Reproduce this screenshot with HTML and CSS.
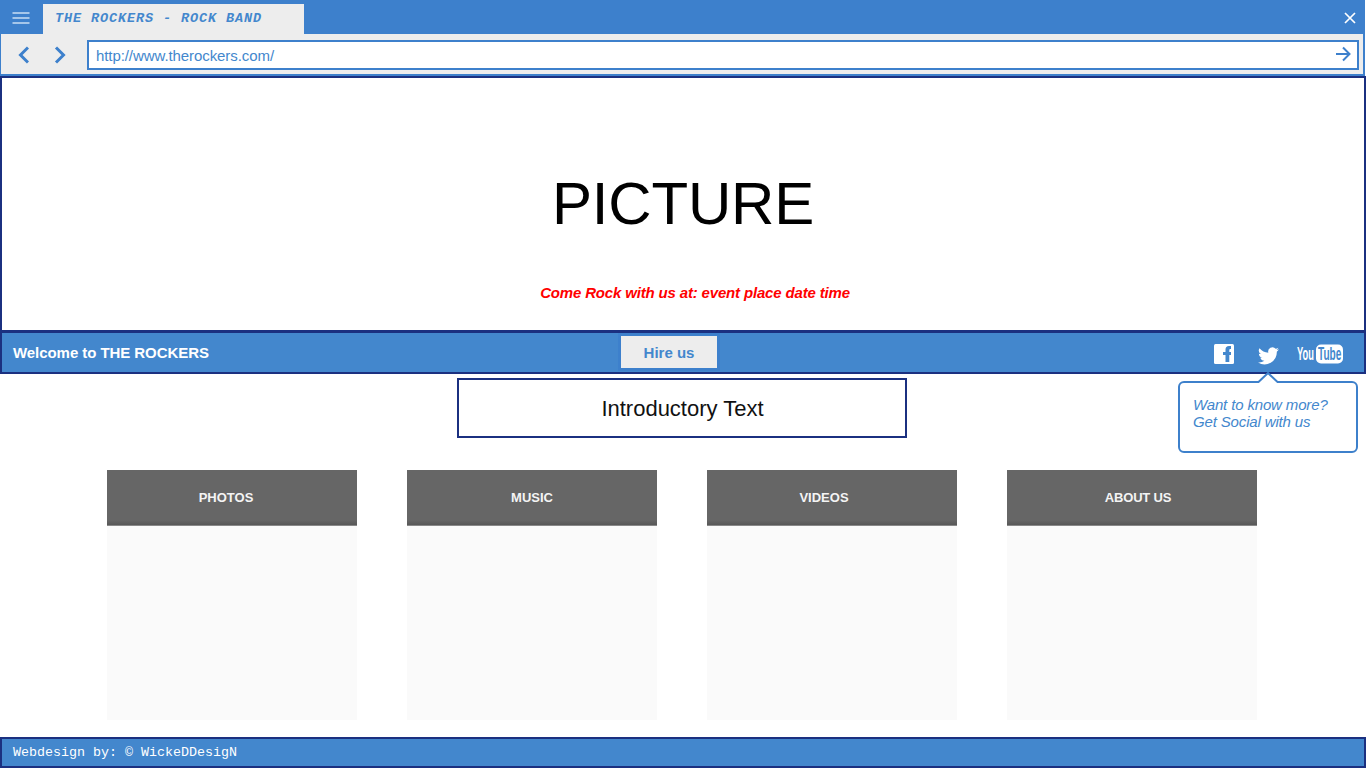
FILE: index.html
```html
<!DOCTYPE html>
<html lang="en">
<head>
<meta charset="utf-8">
<title>The Rockers - Rock Band</title>
<link rel="stylesheet" href="styles.css">
</head>
<body>
<header class="browser">
  <div class="tabs">
    <svg class="menu" width="18" height="14" viewBox="0 0 18 14"><path d="M0.5 2H17.5M0.5 7H17.5M0.5 12H17.5"/></svg>
    <div class="tab">THE ROCKERS - ROCK BAND</div>
    <svg class="close" width="12" height="12" viewBox="0 0 12 12"><path d="M1 1L11 11M11 1L1 11"/></svg>
  </div>
  <div class="toolbar">
    <svg class="nav" width="12" height="18" viewBox="0 0 12 18"><path d="M11 1.5L3.5 9L11 16.5"/></svg>
    <svg class="nav" width="12" height="18" viewBox="0 0 12 18"><path d="M2 1.5L9.5 9L2 16.5"/></svg>
    <div class="address">
      <span>http://www.therockers.com/</span>
      <svg class="go" width="16" height="16" viewBox="0 0 16 16"><path d="M1 8H14.5M8 1.5L14.5 8L8 14.5"/></svg>
    </div>
  </div>
</header>
<section class="hero">
  <h1>PICTURE</h1>
  <p>Come Rock with us at: event place date time</p>
</section>
<nav class="bar">
  <div class="welcome">Welcome to THE ROCKERS</div>
  <div class="hire">Hire us</div>
  <div class="social">
    <svg class="facebook" width="20" height="20" viewBox="0 0 20 20"><rect width="20" height="20" rx="1.5" fill="#fff"/><path fill="#4387cd" d="M9 8H11.500V5.500Q11.500 2 15 2H17V5H16.300Q15.300 5 15.300 6V8H17V11H15.300V18H11.500V11H9Z"/></svg>
    <svg class="twitter" width="21" height="18" viewBox="0 0 24 20"><path fill="#fff" d="M24 2.400a10 10 0 0 1-2.800.8A5 5 0 0 0 23.300.500a10 10 0 0 1-3.100 1.200A4.900 4.900 0 0 0 11.800 6.200 14 14 0 0 1 1.700 1.100a4.900 4.900 0 0 0 1.500 6.500A4.900 4.900 0 0 1 1 7v.1a4.900 4.900 0 0 0 3.900 4.800 5 5 0 0 1-2.200.1 4.900 4.900 0 0 0 4.600 3.400A9.900 9.900 0 0 1 0 17.400a14 14 0 0 0 21.500-12.400A10 10 0 0 0 24 2.400Z"/></svg>
    <svg class="youtube" width="48" height="22" viewBox="0 0 48 22">
      <rect x="19" y="1.500" width="27" height="19" rx="5" fill="#fff"/>
      <text transform="translate(0 17) scale(.49 1)" fill="#fff">You</text>
      <text transform="translate(21 17) scale(.53 1)" fill="#4387cd">Tube</text>
    </svg>
    <div class="bubble">
      <svg class="pointer" width="22" height="12" viewBox="0 0 22 12"><path d="M0 12L1 10L11 1L21 10L22 12Z" fill="#fff"/><path d="M0 10H1.500L11 1L20.500 10H22" fill="none" stroke="#3d80cb" stroke-width="2"/></svg>
      Want to know more?<br>Get Social with us
    </div>
  </div>
</nav>
<main class="content">
  <div class="intro">Introductory Text</div>
  <div class="cards">
    <section class="card"><h2>PHOTOS</h2></section>
    <section class="card"><h2>MUSIC</h2></section>
    <section class="card videos"><h2>VIDEOS</h2></section>
    <section class="card about"><h2>ABOUT US</h2></section>
  </div>
</main>
<footer class="footer">Webdesign by: © WickeDDesigN</footer>
</body>
</html>
```
FILE: styles.css
```css
* { box-sizing: border-box; }
body { margin: 0; width: 1366px; height: 768px; overflow: hidden; display: flex; flex-direction: column; background: #fff; font-family: "Liberation Sans", Arial, sans-serif; }
svg { display: block; flex: none; }
h1, h2, p { margin: 0; }

.browser { width: 1365px; height: 76px; flex: none; background: #ededed; border: solid #3d80cc; border-width: 0 2px 2px 1px; }
.tabs { height: 34px; margin: 0 -2px 0 -1px; padding: 4px 9px 0 12px; display: flex; background: #3d80cc; }
.menu { margin-top: 7px; fill: none; stroke: #a5c6ea; stroke-width: 2; }
.tab { width: 261px; height: 30px; margin-left: 13px; padding-left: 12px; background: #ededed; color: #4387cd; font: italic bold 13.500px/30px "Liberation Mono", "Courier New", monospace; letter-spacing: 0.9px; white-space: nowrap; }
.close { margin: 8px 0 0 auto; fill: none; stroke: #fff; stroke-width: 1.7; }
.toolbar { height: 40px; display: flex; align-items: center; padding: 2px 4px 0 16px; }
.nav { margin-right: 25px; fill: none; stroke: #3d80cc; stroke-width: 3; }
.nav + .nav { margin-right: 20px; }
.address { flex: 1; height: 30px; margin-left: 1px; padding: 0 6px 0 7px; display: flex; align-items: center; justify-content: space-between; background: #fff; border: 2px solid #3d80cc; color: #4387cd; font-size: 15px; letter-spacing: -0.08px; }
.go { margin-top: -2px; fill: none; stroke: #3d80cc; stroke-width: 2; }

.hero { height: 256px; flex: none; border: 2px solid #1b3080; text-align: center; }
.hero h1 { margin-top: 92px; font-size: 60px; font-weight: 400; line-height: 68px; letter-spacing: -0.2px; color: #000; }
.hero p { margin: 46px 0 0 24px; font-size: 15px; font-style: italic; font-weight: 700; line-height: 17px; letter-spacing: -0.165px; color: #f00; }

.bar { height: 43px; margin-top: -1px; flex: none; display: flex; align-items: center; background: #4387cd; border: 2px solid #1b3080; }
.welcome { width: 616px; padding-left: 11px; color: #fff; font-size: 15px; font-weight: 700; letter-spacing: -0.06px; }
.hire { width: 102px; height: 38px; margin-top: -2px; border: 3px solid #3d80cc; background: #ededed; color: #4387cd; font-size: 15px; font-weight: 700; line-height: 33px; text-align: center; }
.social { position: relative; flex: 1; height: 39px; padding-right: 19px; display: flex; align-items: center; justify-content: flex-end; }
.facebook { margin: 3px 24px 0 0; }
.twitter { margin: 7px 18px 0 0; }
.youtube { margin-top: 3px; font: bold 19px "Liberation Sans", sans-serif; }
.bubble { position: absolute; top: 48px; right: 6px; width: 180px; height: 72px; padding: 13px 0 0 13px; border: 2px solid #3d80cb; border-radius: 6px; background: #fff; color: #4387cd; font-size: 15px; font-style: italic; line-height: 17px; letter-spacing: -0.15px; white-space: nowrap; }
.pointer { position: absolute; left: 77px; top: -11px; }

.content { flex: 1; padding-top: 4px; }
.intro { width: 450px; height: 60px; margin-left: 457px; padding-left: 1px; border: 2px solid #1b3080; color: #111; font-size: 22px; line-height: 58px; text-align: center; }
.cards { display: flex; gap: 50px; padding: 32px 0 0 107px; }
.card { width: 250px; height: 250px; background: #fafafa; }
.card h2 { height: 56px; padding-right: 12px; border-bottom: 1px solid #888; background: linear-gradient(#666 50px, #575757 55px); color: #f4f4f4; font-size: 13px; line-height: 55px; text-align: center; }
.card:nth-child(2) h2 { padding-right: 0; }
.videos h2 { padding-right: 16px; }
.about h2 { padding: 0 0 0 12px; letter-spacing: -0.2px; }

.footer { height: 31px; flex: none; padding-left: 11px; border: 2px solid #1b3080; background: #4387cd; color: #fff; font: 13.333px/28px "Liberation Mono", "Courier New", monospace; }
```
